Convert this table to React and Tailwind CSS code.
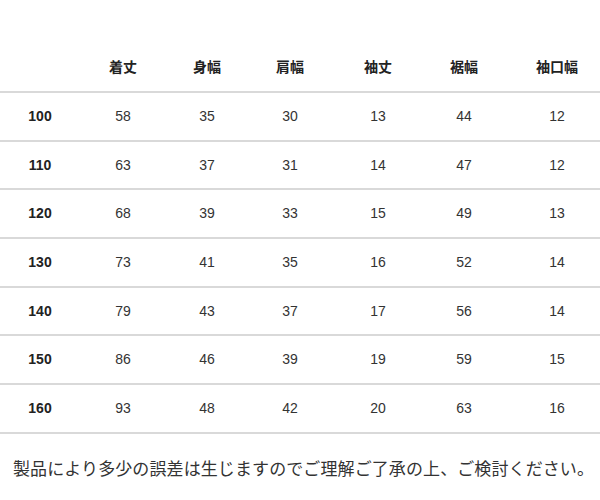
import React from "react";

const headers = ["着丈", "身幅", "肩幅", "袖丈", "裾幅", "袖口幅"];

const rows = [
    ["100", 58, 35, 30, 13, 44, 12],
    ["110", 63, 37, 31, 14, 47, 12],
    ["120", 68, 39, 33, 15, 49, 13],
    ["130", 73, 41, 35, 16, 52, 14],
    ["140", 79, 43, 37, 17, 56, 14],
    ["150", 86, 46, 39, 19, 59, 15],
    ["160", 93, 48, 42, 20, 63, 16],
];

const cols = "grid grid-cols-[80px_86px_82px_84px_92px_80px_106px]";

function App() {
    return (
        <div className="w-[600px] h-[500px] bg-white overflow-hidden font-['Liberation_Sans','Noto_Sans_CJK_JP',sans-serif]">
            {/* ヘッダー */}
            <div className={`${cols} h-[91px] pt-[57px] text-[14px] font-bold text-[#222] leading-[20px]`}>
                <div></div>
                {headers.map((h) => (
                    <div key={h} className="text-center">{h}</div>
                ))}
            </div>

            <div className="border-b-2 border-[#d9d9d9]">
                {rows.map((row) => (
                    <div key={row[0]} className={`${cols} h-[48.7px] border-t-2 border-[#d9d9d9] items-center text-[14px] text-[#333]`}>
                        {row.map((v, i) => (
                            <div key={i} className={`text-center ${i === 0 ? "font-bold text-[#222]" : ""}`}>{v}</div>
                        ))}
                    </div>
                ))}
            </div>

            <p className="mt-[21px] pl-[13px] text-[17px] leading-[25px] tracking-[0.1px] text-[#333] whitespace-nowrap font-['Noto_Sans_CJK_JP',sans-serif]">
                製品により多少の誤差は生じますのでご理解ご了承の上、ご検討ください。
            </p>
        </div>
    );
}

export default App;
